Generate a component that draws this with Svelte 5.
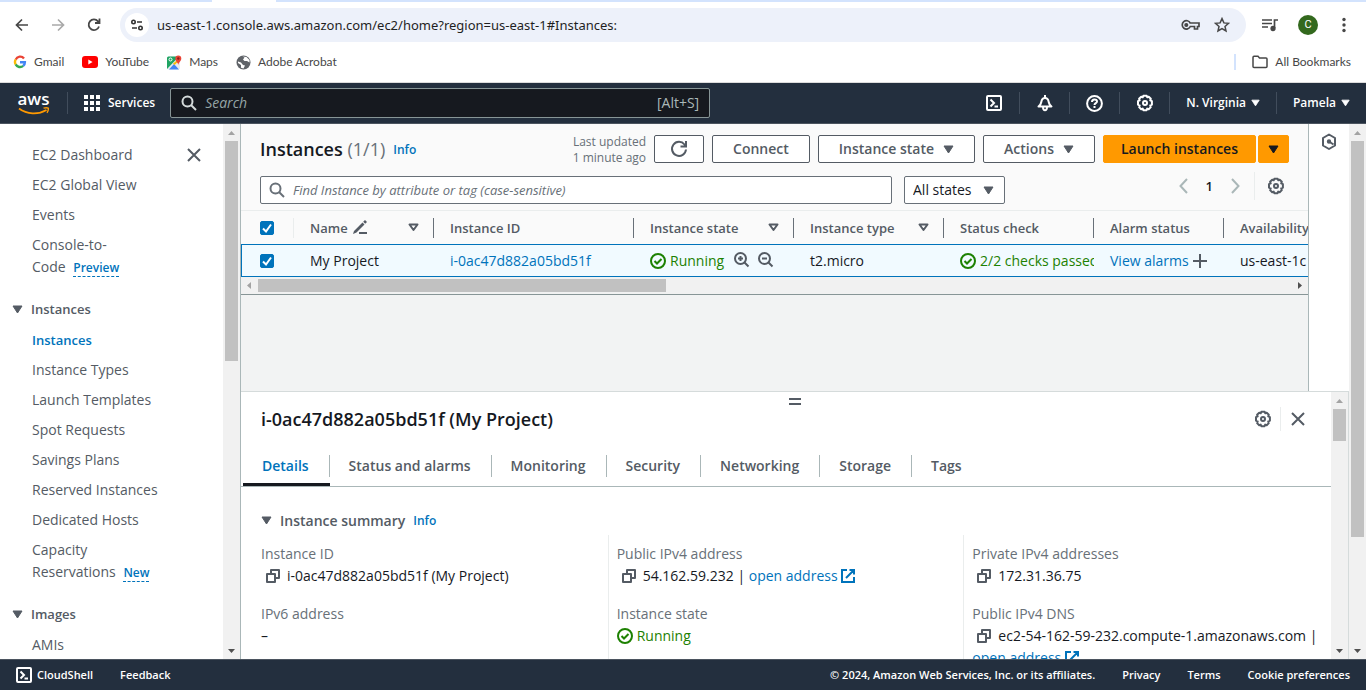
<script>
  const navTop = [['EC2 Dashboard'], ['EC2 Global View'], ['Events'], ['Console-to-', 'Code', 'Preview']];
  const groups = [
    {
      title: 'Instances',
      items: [['Instances'], ['Instance Types'], ['Launch Templates'], ['Spot Requests'], ['Savings Plans'],
        ['Reserved Instances'], ['Dedicated Hosts'], ['Capacity ', 'Reservations', 'New']],
      current: 0
    },
    { title: 'Images', items: [['AMIs']], current: -1 }
  ];
  const tabs = ['Details', 'Status and alarms', 'Monitoring', 'Security', 'Networking', 'Storage', 'Tags'];
  let active = $state('Details');
  let allSelected = $state(true);
  let rowSelected = $state(true);
</script>

{#snippet caret()}
  <svg class="caret" width="11" height="9" viewBox="0 0 11 9" aria-hidden="true"><path d="M1 1h9L5.500 8z" fill="currentColor" stroke="currentColor" stroke-linejoin="round" /></svg>
{/snippet}

{#snippet filterCaret()}
  <svg class="filter" width="11" height="9" viewBox="0 0 11 9" aria-hidden="true"><path d="M1.500 1.500h8L5.500 7z" fill="none" stroke="currentColor" stroke-width="2" stroke-linejoin="round" /></svg>
{/snippet}

{#snippet gear()}
  <svg width="18" height="18" viewBox="0 0 18 18" fill="none" stroke="currentColor" stroke-width="2" aria-hidden="true">
    <path stroke-linejoin="round" d="M7.300 1.800h3.400l.5 1.500 1.500-.6 2.100 2.100-.6 1.500 1.700.8v3.600l-1.700.8.6 1.600-2.100 2.100-1.500-.6-.6 1.600H7.300l-.6-1.600-1.500.6-2.100-2.100.6-1.600-1.700-.8V7.100l1.700-.8-.6-1.500 2.100-2.100 1.500.6z" />
    <circle cx="9" cy="9" r="2" />
  </svg>
{/snippet}

{#snippet check()}
  <svg class="ok" width="16" height="16" viewBox="0 0 16 16" fill="none" stroke="currentColor" stroke-width="2" aria-hidden="true"><circle cx="8" cy="8" r="7" /><path d="M4.500 8l2.500 2.500 4.500-4.500" /></svg>
{/snippet}

{#snippet copy()}
  <button class="icon copy" aria-label="Copy"><svg width="14" height="14" viewBox="0 0 14 14" fill="none" stroke="currentColor" stroke-width="2" aria-hidden="true"><path d="M1 5h8v8H1zM5 5V1h8v8H9" stroke-linejoin="round" /></svg></button>
{/snippet}

{#snippet external()}
  <svg class="ext" width="14" height="14" viewBox="0 0 14 14" fill="none" stroke="currentColor" stroke-width="2" aria-hidden="true"><path d="M6 1H1v12h12V8M8.500 1H13v4.500M13 1L5 9" /></svg>
{/snippet}

{#snippet close()}
  <svg width="14" height="14" viewBox="0 0 14 14" fill="none" stroke="currentColor" stroke-width="2" aria-hidden="true"><path d="M1 1l12 12M13 1L1 13" /></svg>
{/snippet}

{#snippet lens()}
  <svg width="16" height="16" viewBox="0 0 16 16" fill="none" stroke="currentColor" stroke-width="2" aria-hidden="true"><circle cx="6.500" cy="6.500" r="5" /><path d="M10 10l5 5" /></svg>
{/snippet}

{#snippet shell()}
  <svg width="16" height="16" viewBox="0 0 16 16" fill="none" stroke="currentColor" stroke-width="2" aria-hidden="true"><rect x="1" y="1" width="14" height="14" rx="1" /><path d="M4.500 4.500L8 8l-3.500 3.500M8.500 11.500H12" /></svg>
{/snippet}

{#snippet vbar(size)}
  <div class="vbar" aria-hidden="true">
    <svg width="17" height="17"><path d="M5 11h7L8.500 7z" fill="#a3a3a3" /></svg>
    <div class="track"><div class="thumb" style="height: {size}%"></div></div>
    <svg width="17" height="17"><path d="M5 7h7l-3.500 4z" fill="#505050" /></svg>
  </div>
{/snippet}

{#snippet navItem(item, current)}
  <li>
    <a href="#nav" class:current>{item[0]}{#if item[1]}<span class="tail">{item[1]} <span class="tag">{item[2]}</span></span>{/if}</a>
  </li>
{/snippet}

<div class="page">
  <div class="strip"><span></span></div>
  <div class="toolbar">
    <button class="icon" aria-label="Back"><svg width="16" height="16" viewBox="0 0 16 16" fill="none" stroke="#474747" stroke-width="1.700"><path d="M14 8H3M8 2.500L2.500 8 8 13.500" /></svg></button>
    <button class="icon" aria-label="Forward"><svg width="16" height="16" viewBox="0 0 16 16" fill="none" stroke="#a9a9a9" stroke-width="1.700"><path d="M2 8h11M8 2.500L13.500 8 8 13.500" /></svg></button>
    <button class="icon" aria-label="Reload"><svg width="16" height="16" viewBox="0 0 16 16" fill="none" stroke="#474747" stroke-width="1.800"><path d="M13 9.500A5.300 5.300 0 1 1 12 4.300L13.500 6M13.500 1.500V6H9" /></svg></button>
    <div class="omnibox">
      <button class="site" aria-label="Site information"><svg width="14" height="14" viewBox="0 0 14 14" fill="none" stroke="#333" stroke-width="1.600"><circle cx="3.500" cy="4" r="1.700" /><path d="M7 4h5M2 10h5" /><circle cx="10.500" cy="10" r="1.700" /></svg></button>
      <input class="url" aria-label="Address" value="us-east-1.console.aws.amazon.com/ec2/home?region=us-east-1#Instances:" />
      <button class="icon" aria-label="Passwords"><svg width="19" height="14" viewBox="0 0 19 14" fill="none" stroke="#474747" stroke-width="1.700"><path d="M9.200 5H18v3.500h-1.500V11h-3V8.500H9.300A4.200 4.200 0 1 1 9.200 5z" /><circle cx="5.300" cy="7" r="1.200" fill="#474747" /></svg></button>
      <button class="icon" aria-label="Bookmark"><svg width="16" height="16" viewBox="0 0 16 16" fill="none" stroke="#474747" stroke-width="1.500"><path d="M8 1.600l1.900 4.300 4.600.4-3.500 3.100 1 4.600L8 11.600 4 14l1-4.600L1.500 6.300l4.600-.4z" /></svg></button>
    </div>
    <button class="icon" aria-label="Media"><svg width="16" height="14" viewBox="0 0 16 14" fill="none" stroke="#474747" stroke-width="1.700"><path d="M0 2h10M0 5.500h10M0 9h6M12.500 10V2H16" /><circle cx="11" cy="10.500" r="1.800" fill="#474747" /></svg></button>
    <button class="avatar">C</button>
    <button class="icon more" aria-label="Menu"><svg width="4" height="16" viewBox="0 0 4 16" fill="#474747"><circle cx="2" cy="2.500" r="1.700" /><circle cx="2" cy="8" r="1.700" /><circle cx="2" cy="13.500" r="1.700" /></svg></button>
  </div>

  <div class="bookmarks">
    <a href="#gmail"><svg width="14" height="14" viewBox="0 0 14 14" fill="none" stroke-width="2.400"><path d="M11 3.400A4.900 4.900 0 0 0 2.700 4.600" stroke="#ea4335" /><path d="M2.700 4.500a4.900 4.900 0 0 0 0 5" stroke="#fbbc05" /><path d="M2.700 9.400a4.900 4.900 0 0 0 7.500 1.500" stroke="#34a853" /><path d="M10.200 10.900A4.900 4.900 0 0 0 11.900 7.200H7" stroke="#4285f4" /></svg>Gmail</a>
    <a href="#youtube"><svg width="16" height="12" viewBox="0 0 16 12"><rect width="16" height="12" rx="3" fill="#f00" /><path d="M6.300 3.500v5l4.300-2.500z" fill="#fff" /></svg>YouTube</a>
    <a href="#maps"><svg width="15" height="15" viewBox="0 0 15 15"><rect x="0" y="1.500" width="13" height="13" rx="1.500" fill="#e8eaed" /><path d="M0 3a1.500 1.500 0 0 1 1.500-1.500H12L0 14z" fill="#1fa463" /><path d="M2 14.500L7 9l5 5.500z" fill="#4285f4" /><path d="M6 8.500l1.500 1.500L13 5V3z" fill="#fbbc05" /><path d="M11.300 10C11 7 8.300 6.500 8.300 3.500a3 3 0 0 1 6 0c0 3-2.700 3.500-3 6.500z" fill="#ea4335" /><circle cx="11.300" cy="3.500" r="1.200" fill="#8c1d18" /><circle cx="3.500" cy="4.500" r="1.500" fill="none" stroke="#fff" /></svg>Maps</a>
    <a href="#acrobat"><svg width="15" height="15" viewBox="0 0 15 15"><circle cx="7.500" cy="7.500" r="7" fill="#5f6368" /><path d="M2 6.500l3 1 2 2.500 2 .5-1.500 3-2.500-.7V10L2 8zM6.500 1.500l2 1-1.500 2 1.500 1.500L11 6l2.500 1.500V5l-3-3z" fill="#fff" /></svg>Adobe Acrobat</a>
    <a href="#all" class="all"><svg width="16" height="14" viewBox="0 0 16 14" fill="none" stroke="#474747" stroke-width="1.500"><path d="M1 2.500c0-.8.500-1.200 1-1.200h4l1.500 1.800H14c.6 0 1 .4 1 1V11.500c0 .6-.4 1-1 1H2c-.6 0-1-.4-1-1z" /></svg>All Bookmarks</a>
  </div>

  <header class="nav">
    <a href="#aws" class="logo"><span>aws</span><svg width="32" height="8" viewBox="0 0 32 8" fill="none" stroke="#ff9900" stroke-width="1.800"><path d="M1 1.500c8 6 19 6.500 27.500 1.500" /><path d="M25.500 1.200c2-.6 4-.5 4.800 0 .3 1.500-.3 3.200-1.300 4.600" stroke-width="1.400" /></svg></a>
    <button class="services"><svg width="16" height="16" viewBox="0 0 16 16" fill="#fff"><path d="M0 0h4v4H0zM6 0h4v4H6zM12 0h4v4h-4zM0 6h4v4H0zM6 6h4v4H6zM12 6h4v4h-4zM0 12h4v4H0zM6 12h4v4H6zM12 12h4v4h-4z" /></svg>Services</button>
    <label class="gsearch">{@render lens()}<input aria-label="Search" placeholder="Search" /><span>[Alt+S]</span></label>
    <div class="tools">
      <button aria-label="CloudShell">{@render shell()}</button>
      <button aria-label="Notifications"><svg width="16" height="17" viewBox="0 0 16 17" fill="none" stroke="currentColor" stroke-width="2"><path d="M8 0v3M1.500 11.500C3.500 10 4 9 4.300 7c.4-2.600 1.700-4 3.700-4s3.300 1.400 3.700 4c.3 2 .8 3 2.800 4.500z" stroke-linejoin="round" /><path d="M6 11.500c0 5 4 5 4 0" /></svg></button>
      <button aria-label="Support"><svg width="17" height="17" viewBox="0 0 17 17" fill="none" stroke="currentColor" stroke-width="2"><circle cx="8.500" cy="8.500" r="7.400" /><path d="M6 7c0-3.500 5-3.200 5-.6 0 1.800-2.500 1.700-2.500 3.600M8.500 11v2" /></svg></button>
      <button aria-label="Settings">{@render gear()}</button>
      <button class="text">N. Virginia {@render caret()}</button>
      <button class="text">Pamela {@render caret()}</button>
    </div>
  </header>

  <div class="body">
    <aside>
      <nav>
        <button class="icon shut" aria-label="Close navigation">{@render close()}</button>
        <ul>{#each navTop as item}{@render navItem(item, false)}{/each}</ul>
        {#each groups as g}
          <h3>{@render caret()}{g.title}</h3>
          <ul>{#each g.items as item, i}{@render navItem(item, i === g.current)}{/each}</ul>
        {/each}
      </nav>
      {@render vbar(44)}
    </aside>

    <div class="center">
      <div class="upper">
        <main>
          <div class="head">
            <h1>Instances <span>(1/1)</span></h1>
            <a href="#info" class="info">Info</a>
            <p>Last updated<br />1 minute ago</p>
            <button class="btn refresh" aria-label="Refresh"><svg width="18" height="18" viewBox="0 0 18 18" fill="none" stroke="currentColor" stroke-width="2"><path d="M16 9.500A7 7 0 1 1 14.500 4.500L16 6M16 1v5.500h-5.500" /></svg></button>
            <button class="btn">Connect</button>
            <button class="btn">Instance state {@render caret()}</button>
            <button class="btn">Actions {@render caret()}</button>
            <div class="split"><button class="btn go">Launch instances</button><button class="btn go drop" aria-label="More launch options">{@render caret()}</button></div>
          </div>
          <div class="find">
            <label class="box">{@render lens()}<input aria-label="Find instances" placeholder="Find Instance by attribute or tag (case-sensitive)" /></label>
            <div class="pick"><select aria-label="State filter"><option>All states</option></select>{@render caret()}</div>
            <div class="pager">
              <button class="icon dim" aria-label="Previous page"><svg width="9" height="16" viewBox="0 0 9 16" fill="none" stroke="currentColor" stroke-width="2"><path d="M8 1L1.500 8 8 15" /></svg></button>
              <button class="icon num">1</button>
              <button class="icon dim" aria-label="Next page"><svg width="9" height="16" viewBox="0 0 9 16" fill="none" stroke="currentColor" stroke-width="2"><path d="M1 1l6.500 7L1 15" /></svg></button>
              <button class="icon prefs" aria-label="Preferences">{@render gear()}</button>
            </div>
          </div>
          <div class="scroller">
            <table>
              <colgroup><col class="c53" /><col class="c140" /><col class="c200" /><col class="c160" /><col class="c150" /><col class="c150" /><col class="c130" /><col class="c160" /></colgroup>
              <thead>
                <tr>
                  <th class="light"><input type="checkbox" aria-label="Select all" bind:checked={allSelected} /></th>
                  <th><div>Name <svg class="pen" width="15" height="15" viewBox="0 0 15 15"><path d="M1 11L9.500 2.500l2 2L3.500 12.500 0 14zM10.200 1.800L12 0l2 2-1.800 1.800zM6 12h8v2H6z" fill="currentColor" /></svg>{@render filterCaret()}</div></th>
                  <th><div>Instance ID</div></th>
                  <th><div>Instance state {@render filterCaret()}</div></th>
                  <th><div>Instance type {@render filterCaret()}</div></th>
                  <th><div>Status check</div></th>
                  <th><div>Alarm status</div></th>
                  <th><div>Availability Zone</div></th>
                </tr>
              </thead>
              <tbody>
                <tr>
                  <td><input type="checkbox" aria-label="Select My Project" bind:checked={rowSelected} /></td>
                  <td><div>My Project</div></td>
                  <td><div><a href="#instance">i-0ac47d882a05bd51f</a></div></td>
                  <td><div><span class="good">{@render check()}Running</span>
                    <button class="icon zoom" aria-label="Filter to this value"><svg width="16" height="16" viewBox="0 0 16 16" fill="none" stroke="currentColor" stroke-width="2"><circle cx="6.500" cy="6.500" r="5.500" /><path d="M10.500 10.500l4 4M6.500 4v5M4 6.500h5" /></svg></button>
                    <button class="icon zoom" aria-label="Exclude this value"><svg width="16" height="16" viewBox="0 0 16 16" fill="none" stroke="currentColor" stroke-width="2"><circle cx="6.500" cy="6.500" r="5.500" /><path d="M10.500 10.500l4 4M4 6.500h5" /></svg></button></div></td>
                  <td><div>t2.micro</div></td>
                  <td><div><span class="good">{@render check()}2/2 checks passed</span></div></td>
                  <td><div><a href="#alarms">View alarms</a><svg class="plus" width="14" height="14" viewBox="0 0 14 14" stroke="#545b64" stroke-width="2"><path d="M7 0v14M0 7h14" /></svg></div></td>
                  <td><div>us-east-1c</div></td>
                </tr>
              </tbody>
            </table>
          </div>
          <div class="hbar" aria-hidden="true">
            <svg width="17" height="17"><path d="M10 5v7L6 8.500z" fill="#a3a3a3" /></svg>
            <div class="track"><div class="thumb" style="width: 39.5%"></div></div>
            <svg width="17" height="17"><path d="M7 5v7l4-3.500z" fill="#505050" /></svg>
          </div>
        </main>
        <div class="rail"><button class="icon" aria-label="Diagnostics"><svg width="16" height="18" viewBox="0 0 16 18" fill="none" stroke="currentColor" stroke-width="2"><path d="M8 1.500l6 3.500v7.500L8 16l-6-3.500V5z" stroke-linejoin="round" /><path d="M8 8.500l4.500 3" /><circle cx="8" cy="8.500" r="1.200" fill="currentColor" /></svg></button></div>
      </div>

      <section class="panel">
        <div class="content">
          <button class="handle" aria-label="Resize panel"></button>
          <div class="ptitle">
            <h2>i-0ac47d882a05bd51f (My Project)</h2>
            <button class="icon" aria-label="Panel preferences">{@render gear()}</button>
            <button class="icon x" aria-label="Close panel">{@render close()}</button>
          </div>
          <div class="tabs" role="tablist">
            {#each tabs as t}
              <button role="tab" aria-selected={active === t} onclick={() => (active = t)}><span>{t}</span></button>
            {/each}
          </div>
          <h3 class="sum">{@render caret()}Instance summary <a href="#info" class="info">Info</a></h3>
          <div class="cols">
            <dl>
              <dt>Instance ID</dt>
              <dd>{@render copy()}i-0ac47d882a05bd51f (My Project)</dd>
              <dt>IPv6 address</dt>
              <dd>–</dd>
            </dl>
            <dl>
              <dt>Public IPv4 address</dt>
              <dd>{@render copy()}54.162.59.232 | <a href="#open">open address {@render external()}</a></dd>
              <dt>Instance state</dt>
              <dd class="good">{@render check()}Running</dd>
            </dl>
            <dl>
              <dt>Private IPv4 addresses</dt>
              <dd>{@render copy()}172.31.36.75</dd>
              <dt>Public IPv4 DNS</dt>
              <dd>{@render copy()}ec2-54-162-59-232.compute-1.amazonaws.com&nbsp;| <a href="#open">open address {@render external()}</a></dd>
            </dl>
          </div>
        </div>
        {@render vbar(14)}
      </section>
    </div>
    {@render vbar(79)}
  </div>

  <footer>
    <button>{@render shell()}CloudShell</button>
    <a href="#feedback">Feedback</a>
    <span>© 2024, Amazon Web Services, Inc. or its affiliates.</span>
    <a href="#privacy">Privacy</a>
    <a href="#terms">Terms</a>
    <a href="#cookies">Cookie preferences</a>
  </footer>
</div>

<style>
  :global(*) { box-sizing: border-box; }
  :global(body) { margin: 0; }
  :global(button), :global(input), :global(select) { font: inherit; color: inherit; margin: 0; border: 0; padding: 0; background: none; outline: 0; }
  :global(h1), :global(h2), :global(h3), :global(p), :global(ul), :global(dl), :global(dd) { margin: 0; padding: 0; }
  .page { display: flex; flex-direction: column; height: 100vh; overflow: hidden; font: 14px/22px "Open Sans", "Noto Sans", sans-serif; color: #16191f; background: #fff; }
  ul { list-style: none; }
  a { color: #0073bb; text-decoration: none; }
  svg { flex: none; }
  .icon { display: flex; align-items: center; justify-content: center; flex: none; color: #545b64; }

  .strip { flex: none; height: 2px; background: #d3e3fd; padding-left: 212px; }
  .strip span { display: block; width: 64px; height: 2px; background: #fff; }
  .toolbar { flex: none; display: flex; align-items: center; height: 46px; padding: 0 20px 0 14px; gap: 20px; }
  .omnibox { flex: 1; display: flex; align-items: center; gap: 14px; height: 34px; margin: 0 -4px 0 -2px; padding: 0 16px 0 5px; border-radius: 17px; background: #edf1fa; }
  .site { display: grid; place-items: center; width: 24px; height: 24px; border-radius: 50%; background: #fff; }
  .url { flex: 1; min-width: 0; margin-left: -6px; font: 13px/20px "Noto Sans", sans-serif; color: #1f1f1f; }
  .avatar { width: 20px; height: 20px; border-radius: 50%; background: #33691e; color: #fff; font: 11px/20px Roboto, sans-serif; }
  .more { margin-left: 4px; }
  .bookmarks { flex: none; display: flex; align-items: center; gap: 18px; height: 35px; padding: 0 15px 6px 13px; border-bottom: 1px solid #dcdcdc; font-family: Lato, sans-serif; font-size: 12px; }
  .bookmarks a { display: flex; align-items: center; gap: 7px; color: #474747; }
  .bookmarks .all { margin-left: auto; padding-left: 16px; line-height: 16px; border-left: 2px solid #d3e3fd; }

  .nav { flex: none; display: flex; align-items: center; height: 41px; background: #232f3e; color: #fff; border-bottom: 1px solid #4b545f; font-weight: 600; font-size: 12px; }
  .logo { display: flex; flex-direction: column; align-items: center; width: 67px; color: #fff; font-size: 17px; line-height: 14px; }
  .logo span { height: 15px; }
  .services { display: flex; align-items: center; gap: 8px; height: 22px; padding: 0 15px 0 16px; border-left: 1px solid #414d5c; }
  .gsearch { flex: 0 1 540px; display: flex; align-items: center; gap: 8px; height: 30px; padding: 0 10px; border: 1px solid #879596; border-radius: 2px; background: #16191f; color: #d5dbdb; font-weight: 400; font-size: 14px; }
  .gsearch input { flex: 1; min-width: 0; }
  .gsearch input::placeholder { color: #95a5a6; font-style: italic; opacity: 1; }
  .gsearch span { color: #aab7b8; }
  .tools { display: flex; margin-left: auto; }
  .tools button { display: flex; align-items: center; justify-content: center; width: 50px; height: 22px; border-left: 1px solid #414d5c; }
  .tools button:first-child { border: 0; }
  .tools .text { width: auto; gap: 5px; padding: 0 16px; }
  .tools .text .caret { width: 9px; height: 8px; }

  .body { flex: 1; min-height: 0; display: flex; }
  .vbar { flex: none; display: flex; flex-direction: column; width: 17px; background: #f1f1f1; }
  .vbar .track { flex: 1; padding: 0 2px; }
  .thumb { background: #c1c1c1; height: 100%; }
  .hbar { display: flex; height: 18px; background: #f1f1f1; border-bottom: 1px solid #879596; }
  .hbar .track { flex: 1; padding: 2px 0; }

  aside { flex: none; display: flex; width: 241px; border-right: 1px solid #aab7b8; color: #545b64; overflow: hidden; }
  nav { flex: 1; position: relative; padding: 20px 0 0 12px; overflow: hidden; }
  .shut { position: absolute; right: 22px; top: 24px; }
  nav ul { width: 170px; padding-left: 20px; }
  nav li { margin-bottom: 8px; }
  nav li a { color: #545b64; display: block; }
  nav li .current { color: #0073bb; font-weight: 600; font-size: 13px; }
  .tail { display: inline-block; white-space: nowrap; }
  .tag { display: inline-block; margin-left: 4px; color: #0073bb; font-weight: 600; font-size: 12px; line-height: 16px; border-bottom: 1px dashed #0073bb; }
  h3 { display: flex; align-items: center; gap: 8px; font-size: 14px; font-weight: 600; color: #545b64; }
  nav h3 { margin: 20px 0 9px; font-size: 13px; }

  .center { flex: 1; min-width: 0; display: flex; flex-direction: column; }
  .upper { flex: 1; min-height: 0; display: flex; }
  main { flex: 1; min-width: 0; background: #f2f3f3; border-right: 1px solid #aab7b8; }
  .rail { flex: none; width: 40px; padding: 9px 0 0 12px; }
  .head { display: flex; align-items: center; gap: 8px; padding: 8px 19px 0; background: #fafafa; color: #545b64; }
  h1 { font-size: 18px; font-weight: 600; color: #16191f; line-height: 28px; }
  h1 span { font-weight: 400; color: #687078; }
  .info { font-size: 12px; font-weight: 600; }
  .head .info { padding-top: 2px; }
  .head p { margin-left: auto; padding-top: 2px; font-size: 12px; line-height: 16px; color: #687078; text-align: right; }
  .btn { display: flex; align-items: center; gap: 9px; height: 28px; padding: 0 20px; border: 1px solid #545b64; border-radius: 2px; background: #fff; font-weight: 600; color: #545b64; }
  .refresh { padding: 0 15px; }
  .split { display: flex; gap: 2px; }
  .go { padding: 0 17px; background: #f90; border-color: #f90; color: #16191f; }
  .drop { padding: 0 9px; }
  .find { display: flex; align-items: center; gap: 12px; padding: 10px 19px 6px; background: #fafafa; border-bottom: 1px solid #eaeded; }
  .box { flex: 0 1 632px; display: flex; align-items: center; gap: 8px; height: 28px; padding: 0 8px; border: 1px solid #687078; border-radius: 2px; background: #fff; color: #687078; }
  .box input { flex: 1; min-width: 0; font-size: 13px; }
  .box input::placeholder { color: #687078; font-style: italic; opacity: 1; }
  .pick { display: flex; align-items: center; height: 28px; padding: 0 10px 0 8px; border: 1px solid #687078; border-radius: 2px; background: #fff; color: #545b64; }
  .pick select { appearance: none; width: 70px; color: #16191f; }
  .pager { display: flex; align-items: center; height: 28px; margin: -8px 4px 0 auto; gap: 18px; }
  .dim { color: #aab7b8; }
  .num { font-weight: 600; font-size: 13px; color: #16191f; }
  .prefs { height: 28px; margin-left: -4px; padding-left: 12px; border-left: 1px solid #eaeded; }

  .scroller { overflow: hidden; }
  table { table-layout: fixed; width: 1143px; border-collapse: collapse; background: #fafafa; }
  .c53 { width: 53px; } .c130 { width: 130px; } .c140 { width: 140px; } .c150 { width: 150px; } .c160 { width: 160px; } .c200 { width: 200px; }
  th, td { padding: 0; height: 33px; text-align: left; white-space: nowrap; }
  th { font-size: 13px; font-weight: 600; color: #545b64; }
  th > div, td > div { display: flex; align-items: center; overflow: hidden; padding-left: 16px; }
  th > div { height: 20px; border-right: 1px solid #687078; padding-right: 14px; }
  td > div { height: 31px; }
  .light { background: linear-gradient(#eaeded, #eaeded) right center / 1px 20px no-repeat; }
  td:first-child, th:first-child { padding-left: 19px; }
  th .filter { margin-left: auto; }
  .pen { margin-left: 5px; }
  tbody tr { background: #f1faff; outline: 1px solid #0073bb; outline-offset: -1px; }
  input[type="checkbox"] { appearance: none; display: block; width: 14px; height: 14px; border-radius: 2px; border: 1px solid #879596; background: #fff; }
  input[type="checkbox"]:checked { border-color: #0073bb; background: #0073bb url("data:image/svg+xml,%3Csvg xmlns='http://www.w3.org/2000/svg' viewBox='0 0 12 12'%3E%3Cpath d='M2 6.500l3 3 5-7' fill='none' stroke='white' stroke-width='2'/%3E%3C/svg%3E"); }
  .good { display: flex; align-items: center; gap: 4px; color: #1d8102; }
  .zoom { margin: 0 -2px 2px 10px; }
  .plus { margin-left: 4px; }

  .panel { flex: none; display: flex; height: calc(50% + 1px); border-top: 1px solid #d5dbdb; border-right: 1px solid #d5dbdb; background: #fff; }
  .content { flex: 1; min-width: 0; overflow: hidden; }
  .handle { display: block; width: 12px; height: 7px; margin: 6px auto 0; position: relative; left: 9px; border: solid #545b64; border-width: 2px 0; }
  .ptitle { display: flex; align-items: center; padding: 2px 26px 0 20px; }
  h2 { flex: 1; font-size: 18px; line-height: 24px; font-weight: 600; }
  .x { height: 24px; margin-left: 8px; padding-left: 10px; border-left: 1px solid #eaeded; }
  .tabs { display: flex; height: 56px; border-bottom: 1px solid #aab7b8; padding-left: 2px; }
  .tabs button { padding: 18px 0 0; height: 55px; font-weight: 600; color: #545b64; border-bottom: 3px solid transparent; }
  .tabs span { display: block; padding: 0 20px 0 19px; line-height: 22px; border-right: 1px solid #aab7b8; }
  .tabs button:last-child span { border: 0; }
  .tabs [aria-selected="true"] { color: #0073bb; border-bottom-color: #16191f; }
  .sum { padding: 23px 20px 3px; }
  .cols { display: grid; grid-template-columns: repeat(3, 1fr); padding: 0 12px 0 11px; }
  dl { padding: 8px 0 0 8px; border-left: 1px solid #eaeded; min-width: 0; height: 150px; }
  dl:first-child { border-color: transparent; }
  dt { color: #687078; }
  dd { margin-bottom: 16px; color: #16191f; }
  .copy { display: inline-flex; width: 14px; margin: 0 7px 0 5px; vertical-align: -2px; }
  .ext { vertical-align: -2px; }
  dd.good { color: #1d8102; }

  footer { flex: none; display: flex; align-items: center; gap: 27px; height: 31px; padding: 0 16px; background: #232f3e; border-top: 1px solid #4b545f; color: #fff; font-size: 11px; font-weight: 600; }
  footer button { display: flex; align-items: center; gap: 5px; }
  footer a { color: #fff; }
  footer span { margin-left: auto; }
</style>
